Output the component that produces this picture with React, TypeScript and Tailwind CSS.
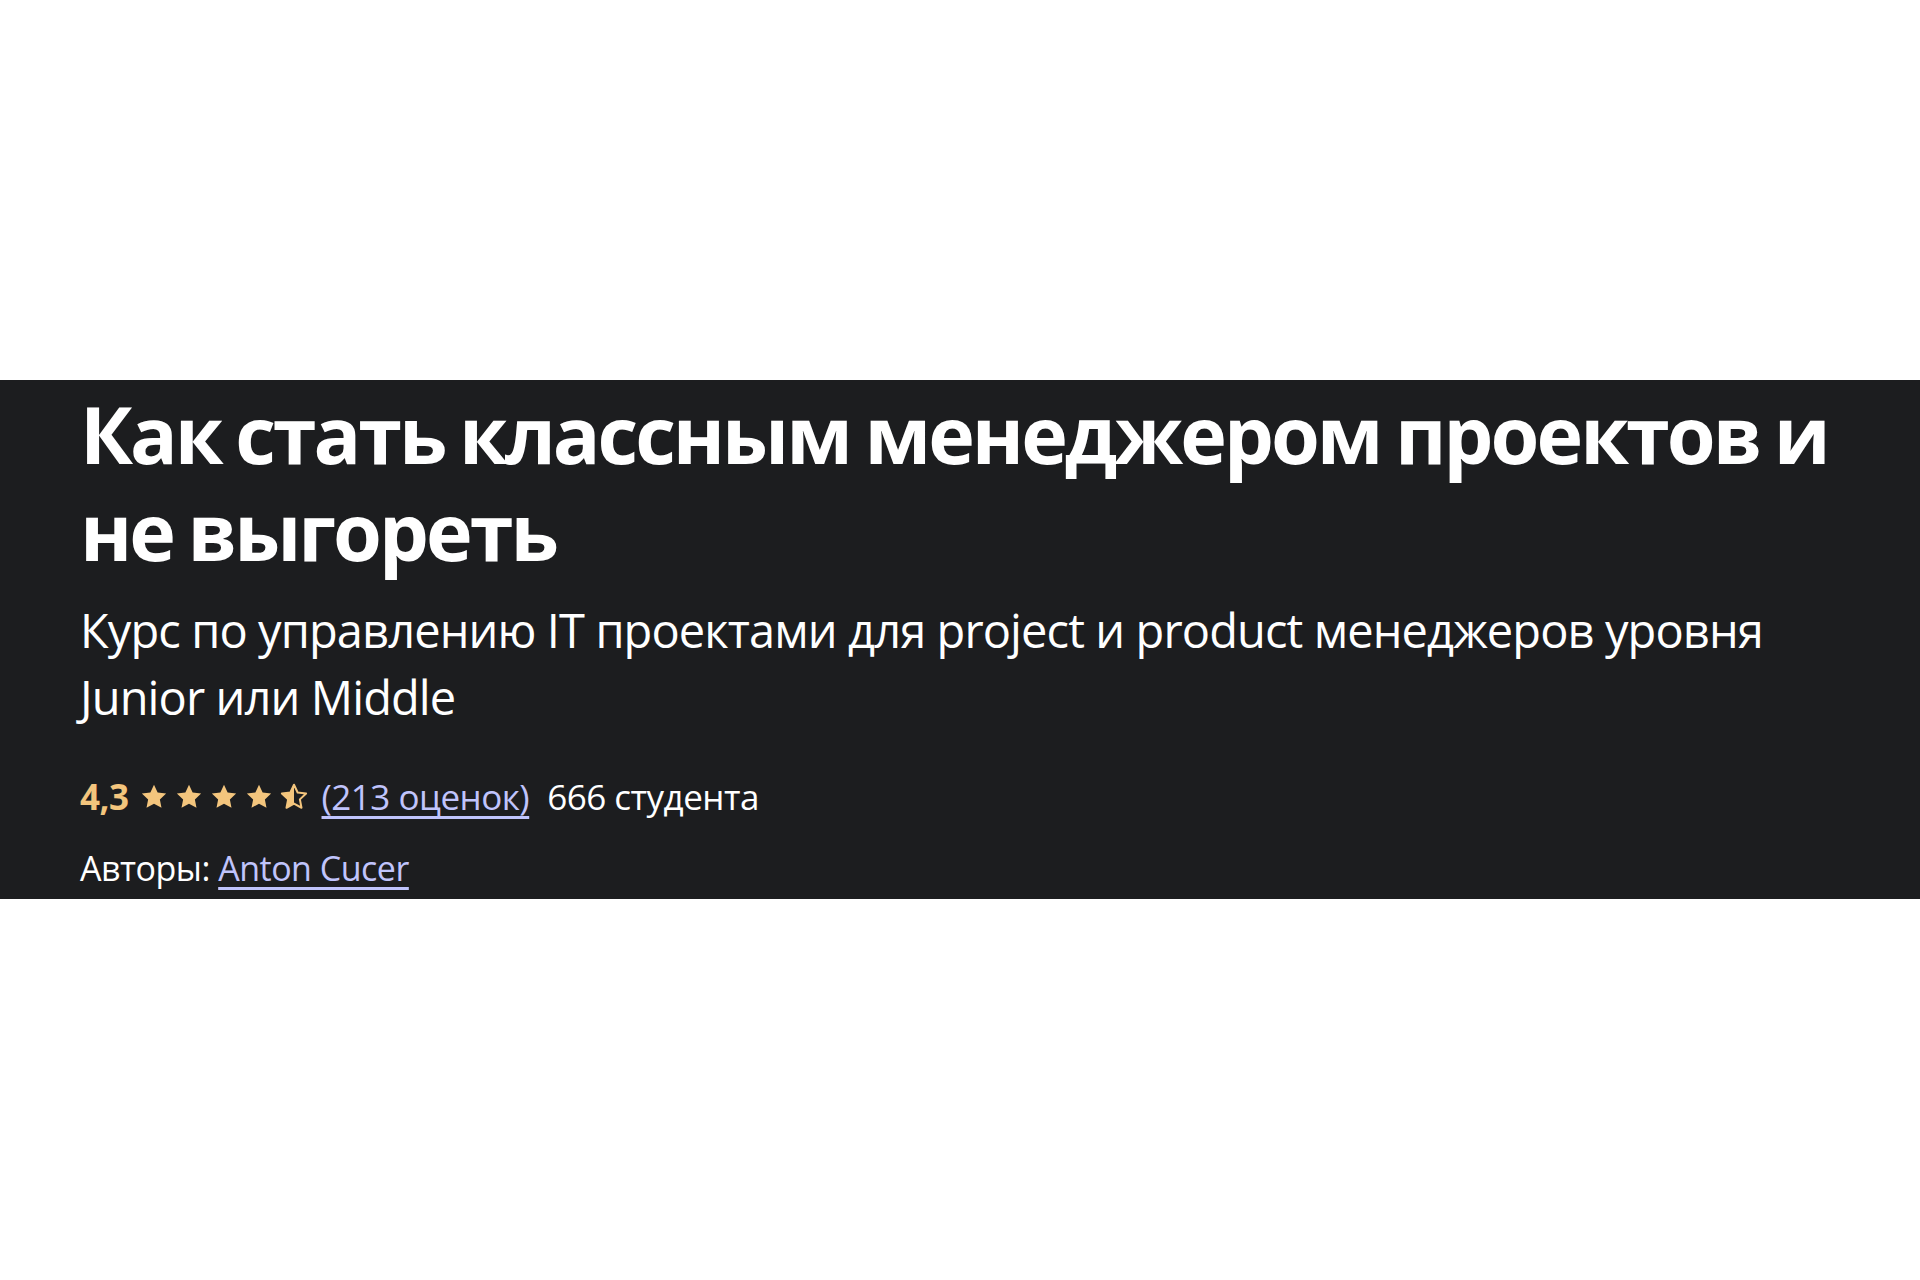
import React from "react";

const STAR = "M12 2.2l2.9 6.2 6.8.8-5 4.7 1.3 6.7L12 17.3 6 20.6l1.3-6.7-5-4.7 6.8-.8z";

function Star({ half = false }: { half?: boolean }) {
  return (
    <svg viewBox="0 0 24 24" className="w-[30px] h-[30px]">
      <defs>
        <clipPath id="left-half">
          <rect x="0" y="0" width="12" height="24" />
        </clipPath>
      </defs>
      {half ? (
        <>
          <path d={STAR} fill="none" stroke="#f3c57d" strokeWidth="1.6" strokeLinejoin="round" />
          <path d={STAR} fill="#f3c57d" clipPath="url(#left-half)" />
        </>
      ) : (
        <path d={STAR} fill="#f3c57d" />
      )}
    </svg>
  );
}

export default function App() {
  return (
    <div className="w-[1920px] h-[1280px] bg-white flex flex-col" style={{ fontFamily: "'Open Sans', 'Noto Sans', sans-serif" }}>
      <div className="h-[380px]" />
      <div className="h-[519px] bg-[#1c1d1f] pl-[80px] flex flex-col">
        <h1 className="w-[1830px] text-white font-bold text-[79px] leading-[97px] tracking-[-3px] [word-spacing:-3px] mt-[5px]">
          Как стать классным менеджером проектов и не выгореть
        </h1>
        <p className="w-[1780px] text-white text-[47px] leading-[67px] tracking-[-0.9px] mt-[18px]">
          Курс по управлению IT проектами для project и product менеджеров уровня Junior или Middle
        </p>
        <div className="flex items-center mt-[42px] text-[35px] leading-[48px] tracking-[-0.5px]">
          <span className="text-[#f3c57d] font-bold mr-[10px]">4,3</span>
          <div className="flex gap-[5px] mr-[13px]">
            <Star />
            <Star />
            <Star />
            <Star />
            <Star half />
          </div>
          <span className="text-[#c0c4fc] underline underline-offset-[6px] mr-[18px]">(213 оценок)</span>
          <span className="text-white font-medium">666 студента</span>
        </div>
        <div className="mt-[23px] text-[34px] leading-[48px] tracking-[-0.5px] text-white">
          Авторы: <span className="text-[#c0c4fc] underline underline-offset-[6px]">Anton Cucer</span>
        </div>
      </div>
    </div>
  );
}
